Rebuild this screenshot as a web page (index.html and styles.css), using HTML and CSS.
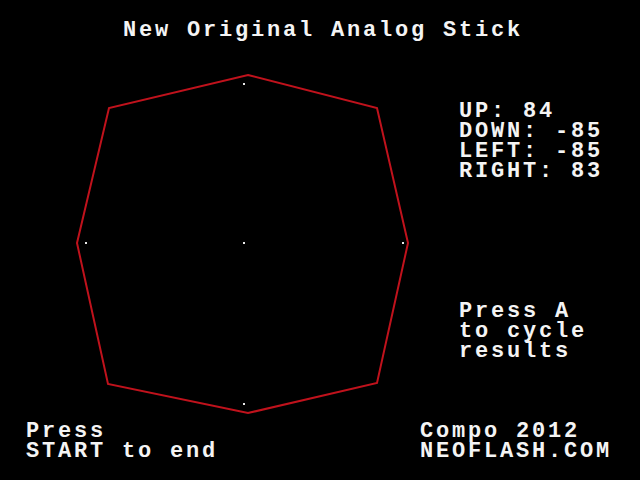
FILE: index.html
```html
<!DOCTYPE html>
<html>
<head>
<meta charset="utf-8">
<link rel="stylesheet" href="styles.css">
</head>
<body>
<main class="screen">
  <h1 class="title">New Original Analog Stick</h1>
  <div class="middle">
    <svg class="stick" width="440" height="381" viewBox="0 40 440 381">
      <polygon class="octagon" points="248,75 377,108 408,243 377,383 248,413 108,384 77,243 109,108"/>
      <rect class="dot" x="243" y="83" width="2" height="2"/>
      <rect class="dot" x="243" y="403" width="2" height="2"/>
      <rect class="dot" x="243" y="242" width="2" height="2"/>
      <rect class="dot" x="85" y="242" width="2" height="2"/>
      <rect class="dot" x="402" y="242" width="2" height="2"/>
    </svg>
    <aside class="side">
      <div class="stats">
        <div>UP: 84</div>
        <div>DOWN: -85</div>
        <div>LEFT: -85</div>
        <div>RIGHT: 83</div>
      </div>
      <div class="hint">
        <div>Press A</div>
        <div>to cycle</div>
        <div>results</div>
      </div>
    </aside>
  </div>
  <footer class="foot">
    <div class="foot-left">
      <div>Press</div>
      <div>START to end</div>
    </div>
    <div class="foot-right">
      <div>Compo 2012</div>
      <div>NEOFLASH.COM</div>
    </div>
  </footer>
</main>
</body>
</html>
```

FILE: styles.css
```css
html, body {
  margin: 0;
  padding: 0;
  background: #000;
}

.screen {
  width: 640px;
  height: 480px;
  background: #000;
  color: #f4f4f4;
  font-family: "Liberation Mono", "DejaVu Sans Mono", monospace;
  font-weight: bold;
  font-size: 22px;
  line-height: 20px;
  letter-spacing: 2.8px;
  white-space: nowrap;
  overflow: hidden;
}

.title {
  margin: 0;
  padding: 21px 0 0 123px;
  height: 19px;
  font-size: 22px;
  line-height: 20px;
  font-weight: bold;
}

.middle {
  display: flex;
  height: 381px;
}

.stick {
  display: block;
  flex: none;
}

.octagon {
  fill: none;
  stroke: #c0121c;
  stroke-width: 2;
}

.dot {
  fill: #e8e8e8;
}

.side {
  padding-left: 19px;
  padding-top: 62px;
  display: flex;
  flex-direction: column;
  gap: 120px;
}

.foot {
  display: flex;
  padding-left: 26px;
  padding-top: 1px;
}

.foot-left {
  width: 394px;
}
```
